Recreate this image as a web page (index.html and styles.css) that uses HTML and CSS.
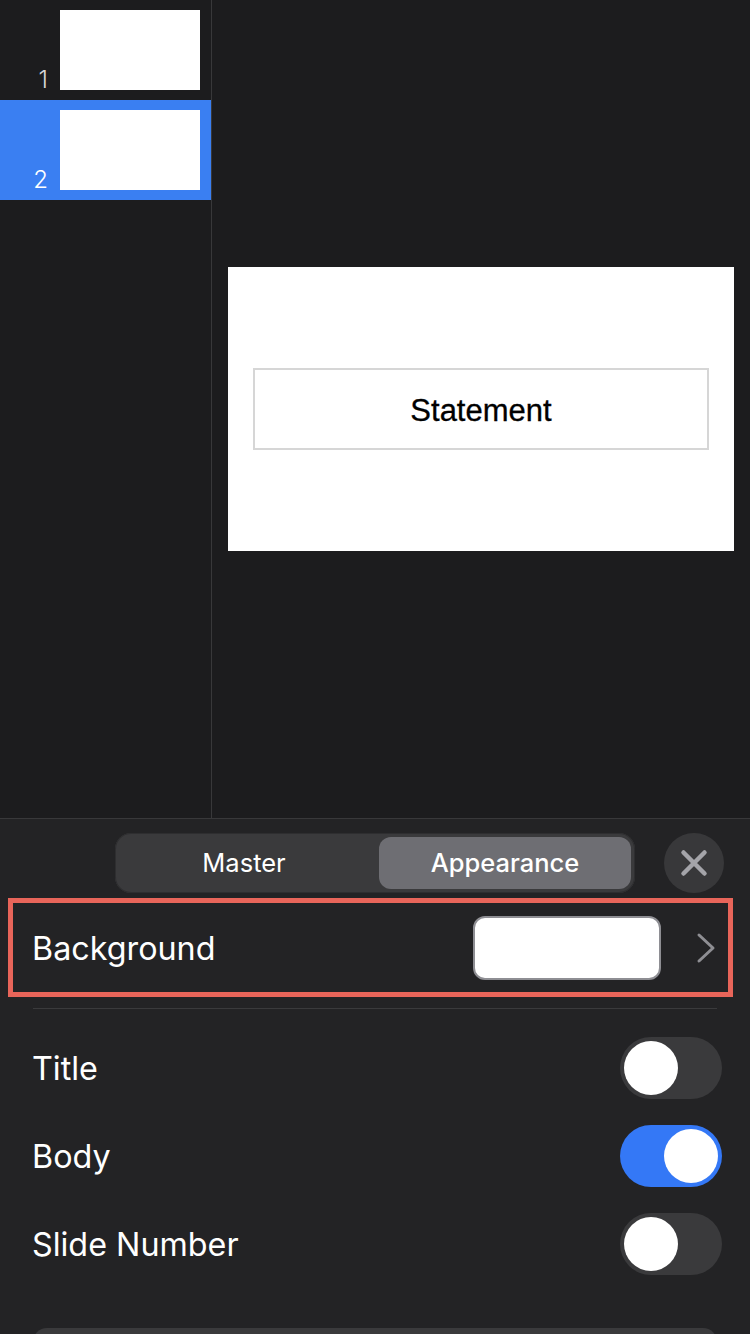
FILE: index.html
```html
<!DOCTYPE html>
<html lang="en">
<head>
<meta charset="utf-8">
<title>Slide appearance</title>
<link rel="stylesheet" href="styles.css">
</head>
<body>
<div class="app">
  <main class="workspace">
    <nav class="sidebar">
      <div class="thumb-row"><span class="thumb-num">1</span><div class="thumb"></div></div>
      <div class="thumb-row is-active"><span class="thumb-num">2</span><div class="thumb"></div></div>
    </nav>
    <section class="canvas">
      <div class="slide">
        <div class="placeholder"><span class="statement">Statement</span></div>
      </div>
    </section>
  </main>
  <section class="panel">
    <header class="panel-head">
      <div class="segmented">
        <div class="segment">Master</div>
        <div class="segment is-selected">Appearance</div>
      </div>
      <button class="close" aria-label="Close">
        <svg class="close-icon" width="28" height="28" viewBox="0 0 28 28"><path d="M3.5 3.5 24.5 24.5M24.5 3.5 3.5 24.5"/></svg>
      </button>
    </header>
    <div class="bg-row">
      <span class="label">Background</span>
      <div class="swatch"></div>
      <svg class="chevron" width="20" height="32" viewBox="0 0 20 32"><path d="M3 3 17 16 3 29"/></svg>
      <div class="highlight"></div>
    </div>
    <div class="divider"></div>
    <div class="toggle-row"><span class="label">Title</span><div class="switch"><div class="knob"></div></div></div>
    <div class="toggle-row"><span class="label">Body</span><div class="switch is-on"><div class="knob"></div></div></div>
    <div class="toggle-row"><span class="label">Slide Number</span><div class="switch"><div class="knob"></div></div></div>
    <div class="peek"></div>
  </section>
</div>
</body>
</html>
```
FILE: styles.css
```css
* { box-sizing: border-box; }
html, body { margin: 0; padding: 0; }
body { width: 750px; height: 1334px; overflow: hidden; background: #1c1c1e; font-family: Inter, "Noto Sans", sans-serif; color: #fff; }
.app { display: flex; flex-direction: column; height: 1334px; }
.workspace { display: flex; height: 818px; background: #1c1c1e; }
.sidebar { width: 212px; border-right: 1px solid #38383a; }
.thumb-row { display: flex; height: 100px; padding: 10px 11px 10px 0; justify-content: flex-end; align-items: flex-end; }
.thumb-row.is-active { background: #3a7ff2; }
.thumb-num { font-size: 24px; font-weight: 300; line-height: 24px; margin-right: 12px; margin-bottom: -2px; color: #d6d6d8; }
.is-active .thumb-num { color: #fff; }
.thumb { width: 140px; height: 80px; background: #fff; }
.canvas { flex: 1; display: flex; align-items: center; justify-content: center; }
.slide { width: 506px; height: 284px; background: #fff; display: flex; align-items: center; justify-content: center; padding-bottom: 1px; }
.placeholder { width: 456px; height: 82px; border: 2px solid #d6d6d6; display: flex; align-items: center; justify-content: center; padding-top: 5px; }
.statement { font-family: "Liberation Sans", Arial, sans-serif; font-size: 31px; color: #000; -webkit-text-stroke: 0.3px #000; }
.panel { flex: 1; background: #232325; border-top: 1px solid #38383a; overflow: hidden; }
.panel-head { display: flex; align-items: center; padding: 14px 26px 0 115px; gap: 29px; height: 74px; }
.segmented { width: 520px; height: 60px; display: flex; padding: 4px; background: #3a3a3c; border-radius: 16px; box-shadow: 0 0 0 1px #2e2e30 inset; }
.segment { flex: 1; display: flex; align-items: center; justify-content: center; font-size: 25.5px; font-weight: 400; padding: 0 10px 2px 0; border-radius: 12px; }
.segment.is-selected { flex: 0 0 252px; padding-right: 0; background: #6e6e73; font-weight: 500; }
.close { width: 60px; height: 60px; padding: 0; border: 0; border-radius: 50%; background: #38383a; display: flex; align-items: center; justify-content: center; }
.close-icon path { fill: none; stroke: #a4a4a9; stroke-width: 4.5; stroke-linecap: round; }
.bg-row { position: relative; display: flex; align-items: center; height: 99px; margin-top: 5px; padding: 0 34px 0 32px; }
.label { font-size: 32.3px; font-weight: 400; line-height: 40px; padding-top: 2px; color: #fff; }
.bg-row .label { flex: 1; }
.swatch { width: 188px; height: 64px; background: #fff; border: 2px solid #8e8e93; border-radius: 12px; margin-right: 35px; }
.chevron path { fill: none; stroke: #8e8e93; stroke-width: 3; stroke-linecap: round; stroke-linejoin: round; }
.highlight { position: absolute; left: 8px; top: 0; width: 725px; height: 99px; border: 5px solid #e8655a; }
.divider { height: 1px; margin: 11px 33px 15px; background: #3a3a3c; }
.toggle-row { display: flex; align-items: center; justify-content: space-between; height: 88px; padding: 0 28px 0 32px; }
.switch { width: 102px; height: 62px; padding: 4px; border-radius: 31px; background: #3a3a3c; display: flex; }
.switch.is-on { background: #3478f6; justify-content: flex-end; }
.knob { width: 54px; height: 54px; border-radius: 50%; background: #fff; }
.peek { height: 40px; margin: 40px 33px 0; background: #3a3a3c; border-radius: 14px; }
```
